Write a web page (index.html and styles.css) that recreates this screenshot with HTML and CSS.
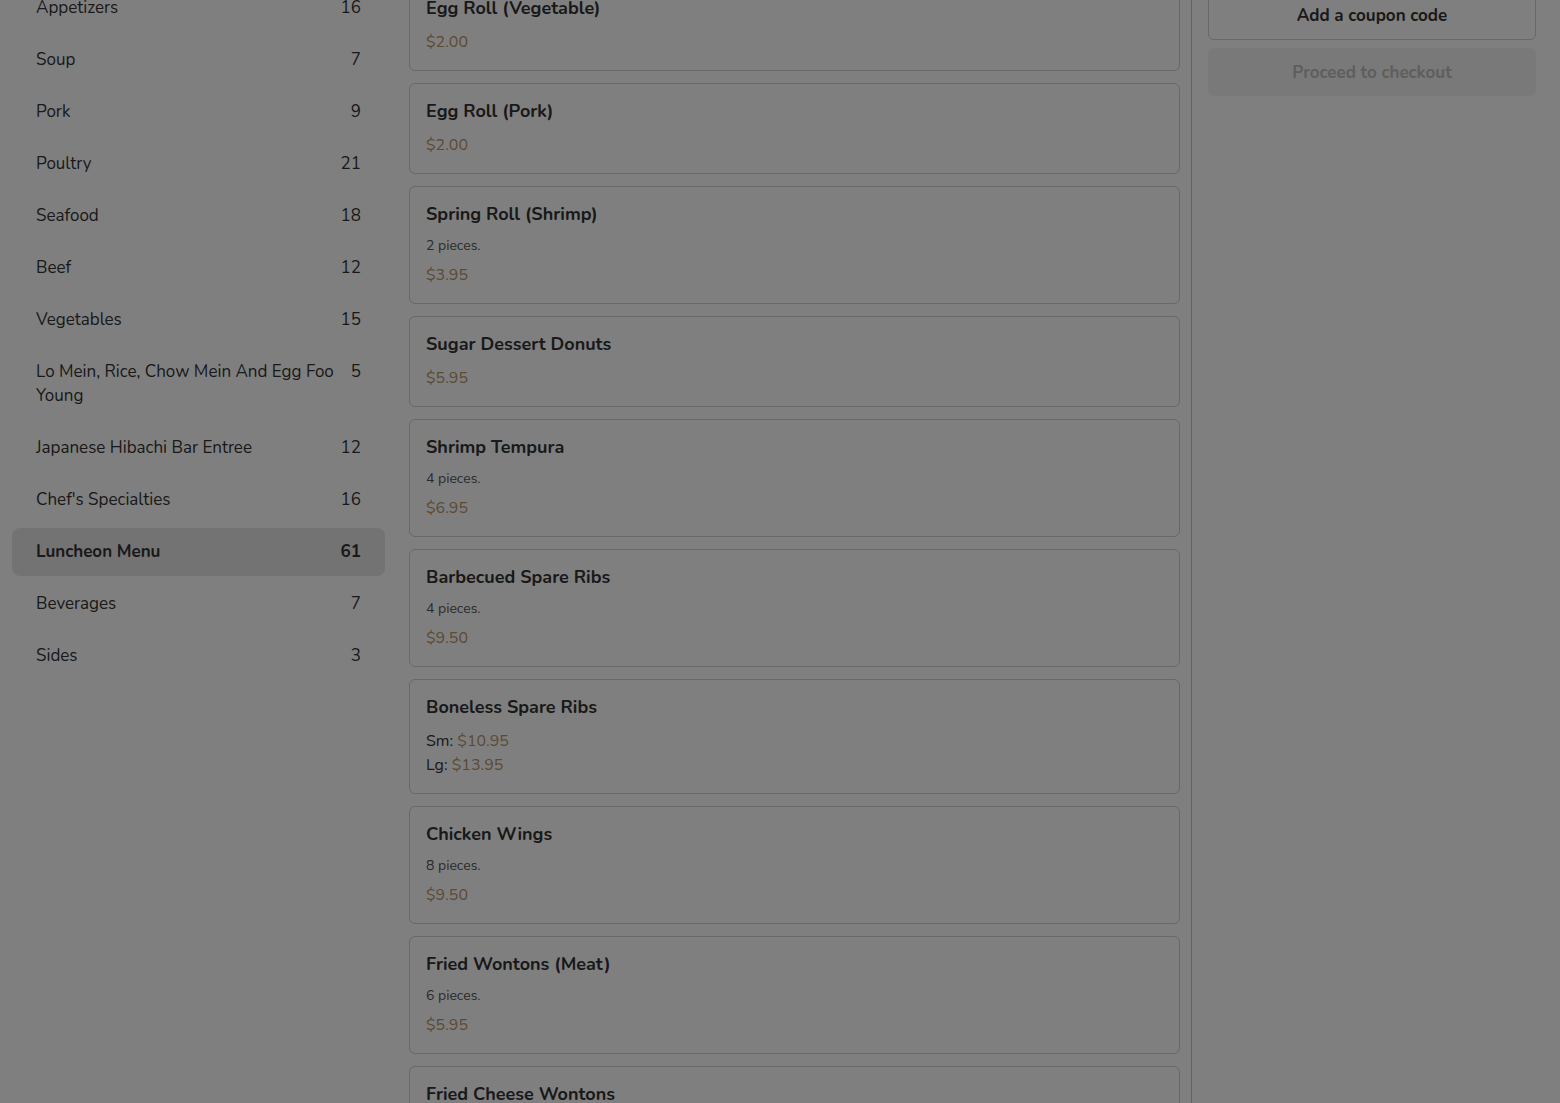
FILE: index.html
```html
<!DOCTYPE html>
<html lang="en">
<head>
<meta charset="utf-8">
<title>Menu</title>
<link rel="stylesheet" href="styles.css">
</head>
<body>
<div class="layout">
  <aside class="categories">
    <ul class="cat-list">
      <li class="cat"><span class="cat-name">Appetizers</span><span class="cat-count">16</span></li>
      <li class="cat"><span class="cat-name">Soup</span><span class="cat-count">7</span></li>
      <li class="cat"><span class="cat-name">Pork</span><span class="cat-count">9</span></li>
      <li class="cat"><span class="cat-name">Poultry</span><span class="cat-count">21</span></li>
      <li class="cat"><span class="cat-name">Seafood</span><span class="cat-count">18</span></li>
      <li class="cat"><span class="cat-name">Beef</span><span class="cat-count">12</span></li>
      <li class="cat"><span class="cat-name">Vegetables</span><span class="cat-count">15</span></li>
      <li class="cat"><span class="cat-name">Lo Mein, Rice, Chow Mein And Egg Foo Young</span><span class="cat-count">5</span></li>
      <li class="cat"><span class="cat-name">Japanese Hibachi Bar Entree</span><span class="cat-count">12</span></li>
      <li class="cat"><span class="cat-name">Chef's Specialties</span><span class="cat-count">16</span></li>
      <li class="cat active"><span class="cat-name">Luncheon Menu</span><span class="cat-count">61</span></li>
      <li class="cat"><span class="cat-name">Beverages</span><span class="cat-count">7</span></li>
      <li class="cat"><span class="cat-name">Sides</span><span class="cat-count">3</span></li>
    </ul>
  </aside>

  <main class="menu">
    <div class="items">
      <div class="item"><h3 class="item-title">Egg Roll (Vegetable)</h3><div class="price">$2.00</div></div>
      <div class="item"><h3 class="item-title">Egg Roll (Pork)</h3><div class="price">$2.00</div></div>
      <div class="item"><h3 class="item-title">Spring Roll (Shrimp)</h3><p class="desc">2 pieces.</p><div class="price">$3.95</div></div>
      <div class="item"><h3 class="item-title">Sugar Dessert Donuts</h3><div class="price">$5.95</div></div>
      <div class="item"><h3 class="item-title">Shrimp Tempura</h3><p class="desc">4 pieces.</p><div class="price">$6.95</div></div>
      <div class="item"><h3 class="item-title">Barbecued Spare Ribs</h3><p class="desc">4 pieces.</p><div class="price">$9.50</div></div>
      <div class="item"><h3 class="item-title">Boneless Spare Ribs</h3><div class="price-row">Sm: <span class="price-val">$10.95</span></div><div class="price-row">Lg: <span class="price-val">$13.95</span></div></div>
      <div class="item"><h3 class="item-title">Chicken Wings</h3><p class="desc">8 pieces.</p><div class="price">$9.50</div></div>
      <div class="item"><h3 class="item-title">Fried Wontons (Meat)</h3><p class="desc">6 pieces.</p><div class="price">$5.95</div></div>
      <div class="item"><h3 class="item-title">Fried Cheese Wontons</h3><p class="desc">6 pieces.</p><div class="price">$5.95</div></div>
    </div>
  </main>

  <aside class="cart">
    <div class="cart-inner">
      <button class="btn-coupon">Add a coupon code</button>
      <button class="btn-checkout" disabled>Proceed to checkout</button>
    </div>
  </aside>
</div>
<div class="overlay"></div>
</body>
</html>
```

FILE: styles.css
```css
* { box-sizing: border-box; }

html, body {
  margin: 0;
  padding: 0;
  height: 100%;
  overflow: hidden;
  background: #ffffff;
}

body {
  font-family: "Nunito", "Nunito Sans", Lato, "Noto Sans", sans-serif;
  color: #333333;
}

.layout {
  display: grid;
  grid-template-columns: 397px 795px 1fr;
  height: 100%;
}

/* Sidebar */
.categories {
  padding: 0 12px;
  overflow: hidden;
}

.cat-list {
  list-style: none;
  margin: -16px 0 0;
  padding: 0;
  display: flex;
  flex-direction: column;
  gap: 4px;
}

.cat {
  display: flex;
  justify-content: space-between;
  align-items: flex-start;
  gap: 16px;
  padding: 12px 24px;
  font-size: 17px;
  line-height: 24px;
  border-radius: 8px;
  color: #333333;
}

.cat-count { text-align: right; }

.cat.active {
  background: #e6e6e6;
  font-weight: 700;
}

/* Menu items */
.menu {
  padding: 0 11px 0 12px;
  border-right: 1px solid #c8c8c8;
  overflow: hidden;
}

.items {
  margin-top: -20px;
  display: flex;
  flex-direction: column;
  gap: 12px;
}

.item {
  border: 1px solid #d0d0d0;
  border-radius: 6px;
  padding: 16px;
}

.item-title {
  margin: 0 0 10px;
  font-size: 18px;
  line-height: 23px;
  font-weight: 700;
  color: #333333;
}

.desc {
  margin: 0 0 8px;
  font-size: 14px;
  line-height: 19px;
  color: #555555;
}

.price, .price-val {
  color: #b8956a;
}

.price, .price-row {
  font-size: 16px;
  line-height: 24px;
}

.price-row { color: #333333; }

/* Cart */
.cart {
  padding: 0 24px 0 16px;
  overflow: hidden;
}

.cart-inner {
  margin-top: -9px;
  display: flex;
  flex-direction: column;
  gap: 8px;
}

.btn-coupon, .btn-checkout {
  height: 48px;
  width: 100%;
  border-radius: 6px;
  font-family: inherit;
  font-size: 17px;
  font-weight: 700;
}

.btn-coupon {
  height: 49px;
  background: #ffffff;
  border: 1px solid #d0d0d0;
  color: #333333;
}

.btn-checkout {
  background: #f3f3f3;
  border: none;
  color: #bcbcbc;
}

.overlay {
  position: fixed;
  inset: 0;
  background: rgba(0, 0, 0, 0.5);
}
```
